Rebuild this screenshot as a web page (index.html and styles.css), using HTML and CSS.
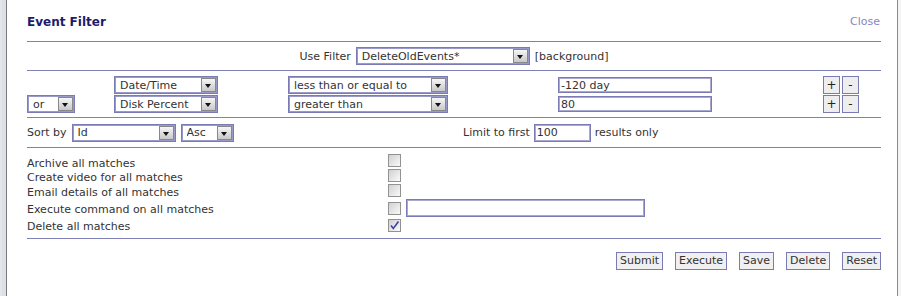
FILE: index.html
```html
<!DOCTYPE html>
<html lang="en">
<head>
    <meta charset="UTF-8">
    <title>Event Filter</title>
    <link rel="stylesheet" href="styles.css">
</head>
<body>
<div class="frame">
    <div class="edge"></div>
    <div class="dialog">
        <div class="header">
            <div class="title">Event Filter</div>
            <a class="close" href="#">Close</a>
        </div>

        <div class="row use-filter">
            <label>Use Filter</label>
            <span class="sel w-filter"><select><option>DeleteOldEvents*</option></select><span class="arrow"></span></span>
            <span>[background]</span>
        </div>

        <div class="terms">
            <span></span>
            <span class="sel w-attr"><select><option>Date/Time</option></select><span class="arrow"></span></span>
            <span class="sel w-op"><select><option>less than or equal to</option></select><span class="arrow"></span></span>
            <input class="txt w-val" type="text" value="-120 day">
            <span class="pm"><button class="sq">+</button><button class="sq">-</button></span>

            <span class="sel w-or"><select><option>or</option></select><span class="arrow"></span></span>
            <span class="sel w-attr"><select><option>Disk Percent</option></select><span class="arrow"></span></span>
            <span class="sel w-op"><select><option>greater than</option></select><span class="arrow"></span></span>
            <input class="txt w-val" type="text" value="80">
            <span class="pm"><button class="sq">+</button><button class="sq">-</button></span>
        </div>

        <div class="row sort">
            <div class="sort-by">
                <label>Sort by</label>
                <span class="sel w-sort"><select><option>Id</option></select><span class="arrow"></span></span>
                <span class="sel w-asc"><select><option>Asc</option></select><span class="arrow"></span></span>
            </div>
            <div class="limit">
                <label>Limit to first</label>
                <input class="txt w-limit" type="text" value="100">
                <span>results only</span>
            </div>
        </div>

        <div class="actions">
            <div class="act r1"><span class="lbl">Archive all matches</span><span class="cb"></span></div>
            <div class="act r2"><span class="lbl">Create video for all matches</span><span class="cb"></span></div>
            <div class="act r3"><span class="lbl">Email details of all matches</span><span class="cb"></span></div>
            <div class="act r4"><span class="lbl">Execute command on all matches</span><span class="cb"></span><input class="txt w-cmd" type="text"></div>
            <div class="act r5"><span class="lbl">Delete all matches</span><span class="cb"><svg width="11" height="11" viewBox="0 0 11 11"><path d="M2 5.5 L4.3 8.5 L9.5 1.5" fill="none" stroke="#3c46a0" stroke-width="1.6"/></svg></span></div>
        </div>

        <div class="buttons">
            <button class="btn">Submit</button>
            <button class="btn">Execute</button>
            <button class="btn">Save</button>
            <button class="btn">Delete</button>
            <button class="btn">Reset</button>
        </div>
    </div>
    <div class="edge-right"></div>
</div>
</body>
</html>
```

FILE: styles.css
```css
body { margin: 0; background: #fff; font-family: "DejaVu Sans", Verdana, sans-serif; font-size: 11px; color: #333; }
.frame { display: flex; height: 296px; }
.edge { width: 4px; background: #dde0e6; border-left: 2px solid #e4e6ea; border-right: 1px solid #7a7a7a; }
.edge-right { width: 3px; border-left: 1px solid #8a8a8a; background: #f4f4f4; }
.dialog { flex: 1; padding: 0 16px 0 20px; }

.header { display: flex; justify-content: space-between; align-items: center; height: 41px; border-bottom: 1px solid #8080b8; }
.title { font-weight: bold; font-size: 12px; color: #1c1c6c; margin-top: 2px; }
.close { color: #8686c2; text-decoration: none; margin-top: 2px; margin-right: 1px; }

.row { display: flex; align-items: center; border-bottom: 1px solid #8080b8; }
.use-filter { justify-content: center; height: 28px; gap: 5px; }

.sel { position: relative; display: inline-block; height: 18px; }
.sel select {
    appearance: none; -webkit-appearance: none;
    width: 100%; height: 100%; margin: 0; box-sizing: border-box;
    border: 1px solid #7a7ab4; box-shadow: inset 0 0 0 1px #9a9ac8;
    background: #fff; font: inherit; color: #333; padding: 0 0 0 5px;
}
.arrow {
    position: absolute; right: 2px; top: 2px; width: 13px; height: 12px;
    border: 1px solid #888; background: linear-gradient(#f6f6f6, #c8c8c8);
}
.arrow::after {
    content: ""; position: absolute; left: 3px; top: 5px;
    border-left: 3.5px solid transparent; border-right: 3.5px solid transparent; border-top: 4px solid #111;
}
.w-filter { width: 174px; }
.w-attr { width: 104px; }
.w-op { width: 160px; }
.w-or { width: 48px; }
.w-sort { width: 104px; }
.w-asc { width: 53px; }

.txt { box-sizing: border-box; height: 17px; border: 1px solid #7a7ab4; box-shadow: inset 0 0 0 1px #a8a8d0; font: inherit; color: #333; padding: 0 2px; margin: 0; }
.w-val { width: 154px; height: 16px; }
.w-limit { width: 57px; height: 18px; }
.w-cmd { width: 239px; height: 18px; }

.terms {
    display: grid; grid-template-columns: 87px 174px 270px 265px auto;
    row-gap: 1px; align-items: center; padding: 5px 0 4px; border-bottom: 1px solid #8080b8;
}
.pm { display: flex; gap: 2px; }
.sq { width: 17px; height: 18px; padding: 0; border: 1px solid #7a7ab4; background: #eeeeee; font: inherit; font-size: 12px; color: #222; line-height: 14px; }

.sort { height: 29px; }
.sort-by { display: flex; align-items: center; gap: 5px; width: 436px; }
.limit { display: flex; align-items: center; gap: 4px; }

.actions { padding: 3px 0 5px; border-bottom: 1px solid #8080b8; }
.act { display: grid; grid-template-columns: 356px 13px auto; column-gap: 5px; align-items: center; height: 16px; }
.act .lbl { padding-top: 6px; }
.act.r2 { height: 15px; }
.act.r2 .lbl, .act.r3 .lbl { padding-top: 4px; }
.act.r3 { height: 17px; }
.act.r4 { height: 18px; }
.act.r4 .lbl, .act.r5 .lbl { padding-top: 2px; }
.cb { width: 11px; height: 11px; border: 1px solid #929292; background: linear-gradient(135deg, #d0d0d0, #fafafa); display: flex; align-items: center; justify-content: center; }

.buttons { display: flex; justify-content: flex-end; gap: 12px; padding-top: 13px; }
.btn { height: 18px; padding: 0 3px; border: 1px solid #7a7ab4; background: #f0f0f0; font: inherit; color: #333; line-height: 14px; }
```
